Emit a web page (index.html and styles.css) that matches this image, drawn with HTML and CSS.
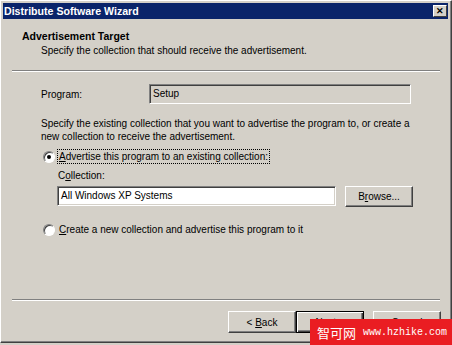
FILE: index.html
```html
<!DOCTYPE html>
<html lang="en">
<head>
    <meta charset="UTF-8">
    <meta name="viewport" content="width=device-width, initial-scale=1.0">
    <title>Distribute Software Wizard</title>
    <link rel="stylesheet" href="styles.css">
</head>
<body>
    <div class="window">
        <div class="titlebar">
            <span class="title">Distribute Software Wizard</span>
            <span class="close">&#x2715;</span>
        </div>

        <div class="header">
            <div class="header-title">Advertisement Target</div>
            <div class="header-sub">Specify the collection that should receive the advertisement.</div>
        </div>
        <div class="separator"></div>

        <div class="content">
            <div class="program-row">
                <span class="program-label">Program:</span>
                <div class="field readonly">Setup</div>
            </div>

            <p class="intro">Specify the existing collection that you want to advertise the program to, or create a new collection to receive the advertisement.</p>

            <div class="radio-row">
                <span class="radio checked"></span>
                <span class="radio-label focused"><u>A</u>dvertise this program to an existing collection:</span>
            </div>

            <div class="collection">
                <div class="collection-label">C<u>o</u>llection:</div>
                <div class="collection-row">
                    <div class="field input">All Windows XP Systems</div>
                    <button class="btn browse">B<u>r</u>owse...</button>
                </div>
            </div>

            <div class="radio-row second">
                <span class="radio"></span>
                <span class="radio-label"><u>C</u>reate a new collection and advertise this program to it</span>
            </div>
        </div>

        <div class="separator"></div>
        <div class="buttons">
            <button class="btn">&lt; <u>B</u>ack</button>
            <button class="btn default"><u>N</u>ext &gt;</button>
            <button class="btn cancel">Cancel</button>
        </div>
    </div>

    <div class="watermark">
        <span class="wm-cn">智可网</span>
        <span class="wm-url">www.hzhike.com</span>
    </div>
</body>
</html>
```

FILE: styles.css
```css
body {
    margin: 0;
    width: 452px;
    height: 345px;
    position: relative;
    overflow: hidden;
    background-color: #d4d0c8;
    font-family: "Liberation Sans", Arial, sans-serif;
    font-size: 10px;
    line-height: 13px;
    color: #000;
}

.window {
    width: 452px;
    height: 343px;
    box-sizing: border-box;
    border: 1px solid;
    border-color: #fff #404040 #404040 #fff;
    box-shadow: inset -1px -1px #808080;
    padding: 2px 3px 3px 2px;
    display: flex;
    flex-direction: column;
}

/* Заголовок окна */
.titlebar {
    height: 16px;
    background-color: #0a246a;
    color: #fff;
    display: flex;
    justify-content: space-between;
    align-items: center;
    padding-left: 1px;
}

.title {
    font-weight: bold;
    font-size: 10.6px;
}

.close {
    width: 14px;
    height: 12px;
    box-sizing: border-box;
    margin-right: 1px;
    background-color: #d4d0c8;
    color: #000;
    border: 1px solid;
    border-color: #fff #404040 #404040 #fff;
    font-size: 9px;
    font-weight: bold;
    line-height: 10px;
    text-align: center;
}

.header {
    padding: 11px 0 0 19px;
}

.header-title {
    font-weight: bold;
    font-size: 10.5px;
}

.header-sub {
    margin-top: 1px;
    padding-left: 19px;
}

.separator {
    margin: 13px 8px 0 9px;
    border-top: 1px solid #808080;
    border-bottom: 1px solid #fff;
}

.content {
    padding-left: 38px;
    flex: 1;
}

.program-row {
    display: flex;
    align-items: center;
    margin-top: 12px;
}

.program-label {
    width: 108px;
}

.field {
    box-sizing: border-box;
    height: 20px;
    border: 1px solid;
    border-color: #808080 #fff #fff #808080;
    box-shadow: inset 1px 1px #404040, inset -1px -1px #d4d0c8;
    padding: 2px 3px;
    white-space: nowrap;
}

.field.readonly {
    width: 262px;
    background-color: #d4d0c8;
}

.intro {
    margin: 13px 0 0;
    max-width: 372px;
}

.radio-row {
    display: flex;
    align-items: center;
    margin-top: 6px;
    height: 15px;
}

.radio-row.second {
    margin-top: 15px;
}

.radio {
    width: 12px;
    height: 12px;
    box-sizing: border-box;
    margin-left: 2px;
    border-radius: 50%;
    background-color: #fff;
    border: 1px solid;
    border-color: #808080 #fff #fff #808080;
    box-shadow: inset 1px 1px #404040;
    display: flex;
    justify-content: center;
    align-items: center;
}

.radio.checked::after {
    content: '';
    width: 4px;
    height: 4px;
    border-radius: 50%;
    background-color: #000;
}

.radio-label {
    margin-left: 2px;
    padding: 0 1px;
    border: 1px solid transparent;
}

.radio-label.focused {
    border: 1px dotted #000;
}

.collection {
    padding-left: 16px;
}

.collection-label {
    margin-top: 5px;
    padding-left: 1px;
}

.collection-row {
    display: flex;
    gap: 9px;
    margin-top: 4px;
}

.field.input {
    width: 279px;
    background-color: #fff;
}

/* Кнопки в стиле Windows Classic */
.btn {
    height: 22px;
    width: 68px;
    padding: 0;
    background-color: #d4d0c8;
    border: 1px solid;
    border-color: #fff #404040 #404040 #fff;
    box-shadow: inset -1px -1px #808080;
    font-family: inherit;
    font-size: 10px;
    color: #000;
}

.btn.browse {
    height: 21px;
}

.btn.default {
    border-color: #000;
    box-shadow: inset 1px 1px #fff, inset -1px -1px #404040, inset -2px -2px #808080;
}

.buttons {
    display: flex;
    justify-content: flex-end;
    margin: 10px 7px 6px 0;
}

.btn.cancel {
    margin-left: 9px;
}

.watermark {
    position: absolute;
    right: 0;
    bottom: 0;
    width: 142px;
    height: 26px;
    background-color: #ea1d22;
    color: #fff;
    display: flex;
    align-items: center;
    padding-left: 7px;
    box-sizing: border-box;
    white-space: nowrap;
}

.wm-cn {
    flex-shrink: 0;
    font-family: "Noto Sans CJK SC", sans-serif;
    font-size: 13px;
}

.wm-url {
    flex-shrink: 0;
    margin-left: 7px;
    font-family: "Liberation Mono", monospace;
    font-size: 10px;
}
```
